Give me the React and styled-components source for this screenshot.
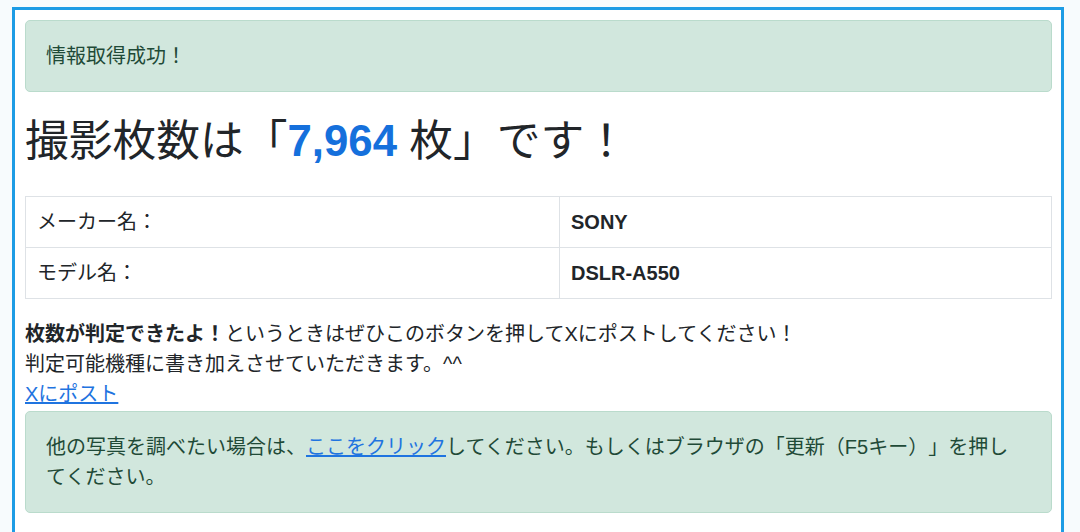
import React from "react";
import styled, { createGlobalStyle } from "styled-components";

const Global = createGlobalStyle`
  html, body { margin: 0; padding: 0; background: #f7fbfd; }
  body {
    font-family: "Liberation Sans", "Noto Sans CJK JP", sans-serif;
    font-size: 20px;
    line-height: 1.5;
    color: #212529;
    text-spacing-trim: space-all;
  }
  * { box-sizing: border-box; }
`;

const Frame = styled.div`
  margin: 7px 0 0 12px;
  width: 1052px;
  min-height: 540px;
  background: #fff;
  border: 3px solid #1d9ce5;
  border-bottom: none;
  padding: 10px 9px 10px 10px;
`;

const Alert = styled.div`
  background: #d1e7dd;
  border: 1px solid #badbcc;
  border-radius: 5px;
  color: #1f4a37;
  padding: 20px ${(p) => p.$padRight || 20}px 20px 20px;
  margin: ${(p) => p.$margin || "0"};
`;

const Heading = styled.h1`
  font-size: 43.75px;
  font-weight: 400;
  line-height: 1.2;
  margin: 23px 0 28px;
  color: #212529;
`;

const Count = styled.strong`
  color: #1570dc;
  font-weight: 700;
`;

const Table = styled.table`
  width: 100%;
  border-collapse: collapse;
  margin-bottom: 20px;
`;

const Cell = styled.td`
  border: 1px solid #dee2e6;
  padding: 10px 10px 10px 11px;
  width: ${(p) => p.$width || "auto"};
  font-weight: ${(p) => (p.$bold ? 700 : 400)};
`;

const Note = styled.div`
  margin: 0;
`;

const Link = styled.a`
  color: #1f74e0;
  text-decoration: underline;
  cursor: pointer;
`;

export default function App() {
  return (
    <>
      <Global />
      <Frame>
        <Alert>情報取得成功！</Alert>
        <Heading>
          撮影枚数は「<Count>7,964</Count> 枚」です！
        </Heading>
        <Table>
          <tbody>
            <tr>
              <Cell $width="534px">メーカー名：</Cell>
              <Cell $bold>SONY</Cell>
            </tr>
            <tr>
              <Cell $width="534px">モデル名：</Cell>
              <Cell $bold>DSLR-A550</Cell>
            </tr>
          </tbody>
        </Table>
        <Note>
          <strong>枚数が判定できたよ！</strong>
          というときはぜひこのボタンを押してXにポストしてください！
          <br />
          判定可能機種に書き加えさせていただきます。^^
          <br />
          <Link>Xにポスト</Link>
        </Note>
        <Alert $margin="2px 0 0" $padRight={24}>
          他の写真を調べたい場合は、<Link>ここをクリック</Link>
          してください。もしくはブラウザの「更新（F5キー）」を押してください。
        </Alert>
      </Frame>
    </>
  );
}
